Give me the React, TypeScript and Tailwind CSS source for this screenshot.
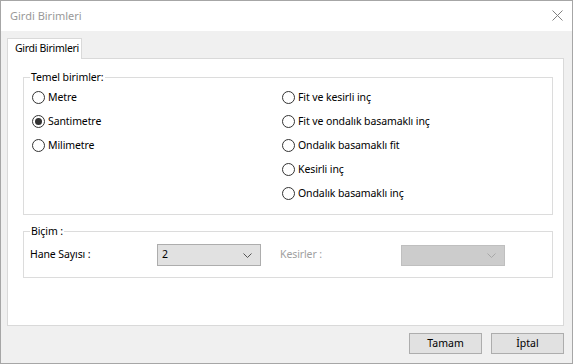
import { type ReactNode } from "react";

const font = { fontFamily: '"Noto Sans", "Open Sans", sans-serif' };

type RadioProps = {
  checked?: boolean;
  label: string;
};

function Radio({ checked = false, label }: RadioProps) {
  return (
    <label className="flex h-[24px] items-center gap-[3px]">
      <span className="flex h-[13px] w-[13px] items-center justify-center rounded-full border border-[#333] bg-white">
        {checked && <span className="h-[7px] w-[7px] rounded-full bg-[#333]" />}
      </span>
      <span className="text-[10.5px] leading-none tracking-[-0.1px] text-black">{label}</span>
    </label>
  );
}

function GroupBox({ children, className, title }: { children: ReactNode; className?: string; title: string }) {
  return (
    <fieldset className={`border border-[#dcdcdc] px-[6px] ${className ?? ""}`}>
      <legend className="px-px text-[10.5px] leading-[16px] tracking-[-0.1px] text-black">{title}</legend>
      {children}
    </fieldset>
  );
}

function Chevron({ color }: { color: string }) {
  return (
    <svg width="9" height="5" viewBox="0 0 9 5" fill="none">
      <path d="M0.5 0.5 L4.5 4.5 L8.5 0.5" stroke={color} strokeWidth="1" />
    </svg>
  );
}

export default function App() {
  const leftUnits = ["Metre", "Santimetre", "Milimetre"];
  const rightUnits = [
    "Fit ve kesirli inç",
    "Fit ve ondalık basamaklı inç",
    "Ondalık basamaklı fit",
    "Kesirli inç",
    "Ondalık basamaklı inç",
  ];

  return (
    <div className="flex h-[364px] w-[573px] flex-col border border-[#a6a6a6] bg-[#f0f0f0]" style={font}>
      <div className="flex h-[30px] items-center justify-between bg-white pl-[9px] pr-[9px]">
        <span className="text-[11px] text-[#999]">Girdi Birimleri</span>
        <svg width="11" height="11" viewBox="0 0 11 11" className="mt-[-1px]">
          <path d="M0.5 0.5 L10.5 10.5 M10.5 0.5 L0.5 10.5" stroke="#808080" strokeWidth="1" />
        </svg>
      </div>

      <div className="flex flex-1 flex-col px-[6px] pt-[7px]">
        <div className="flex">
          <div className="z-10 -mb-px flex h-[21px] w-[75px] items-center whitespace-nowrap border border-b-0 border-[#d9d9d9] bg-white pl-[7px] text-[10.5px] tracking-[-0.3px] text-black">
            Girdi Birimleri
          </div>
        </div>

        <div className="flex h-[268px] w-[557px] flex-col border border-[#d9d9d9] bg-white pl-[15px] pt-[10px]">
          <GroupBox className="w-[530px] pb-[9px]" title="Temel birimler:">
            <div className="flex pl-[2px]">
              <div className="flex w-[250px] flex-col">
                {leftUnits.map((unit) => (
                  <Radio checked={unit === "Santimetre"} key={unit} label={unit} />
                ))}
              </div>
              <div className="flex flex-col">
                {rightUnits.map((unit) => (
                  <Radio key={unit} label={unit} />
                ))}
              </div>
            </div>
          </GroupBox>

          <GroupBox className="mt-[8px] w-[530px] pb-[11px] pt-[5px]" title="Biçim :">
            <div className="flex items-center text-[10.5px] tracking-[-0.1px]">
              <span className="w-[127px] text-black">Hane Sayısı :</span>
              <div className="flex h-[22px] w-[104px] items-center justify-between border border-[#adadad] bg-[#e1e1e1] pl-[4px] pr-[8px] text-black">
                <span>2</span>
                <Chevron color="#555" />
              </div>
              <span className="ml-[19px] w-[121px] text-[#a0a0a0]">Kesirler :</span>
              <div className="flex h-[21px] w-[104px] items-center justify-end border border-[#bfbfbf] bg-[#cccccc] pr-[8px]">
                <Chevron color="#a8a8a8" />
              </div>
            </div>
          </GroupBox>
        </div>

        <div className="mt-[7px] flex w-[557px] justify-end gap-[9px]">
          <button className="h-[21px] w-[73px] border border-[#adadad] bg-[#e1e1e1] text-[10.5px] text-black" type="button">
            Tamam
          </button>
          <button className="h-[21px] w-[73px] border border-[#adadad] bg-[#e1e1e1] text-[10.5px] text-black" type="button">
            İptal
          </button>
        </div>
      </div>
    </div>
  );
}
